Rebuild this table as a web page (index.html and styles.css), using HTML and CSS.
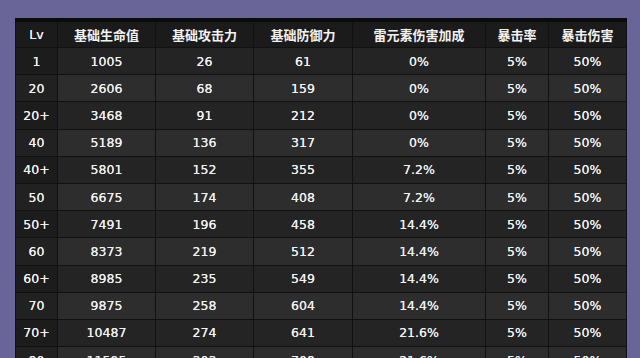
FILE: index.html
```html
<!DOCTYPE html>
<html lang="zh">
<head>
<meta charset="utf-8">
<link rel="stylesheet" href="styles.css">
</head>
<body>
<div class="page">
<table class="stats">
  <colgroup>
    <col class="c1"><col class="c2"><col class="c3"><col class="c4"><col class="c5"><col class="c6"><col class="c7">
  </colgroup>
  <thead>
    <tr><th class="lv">Lv</th><th>基础生命值</th><th>基础攻击力</th><th>基础防御力</th><th>雷元素伤害加成</th><th>暴击率</th><th>暴击伤害</th></tr>
  </thead>
  <tbody>
    <tr><td>1</td><td>1005</td><td>26</td><td>61</td><td>0%</td><td>5%</td><td>50%</td></tr>
    <tr><td>20</td><td>2606</td><td>68</td><td>159</td><td>0%</td><td>5%</td><td>50%</td></tr>
    <tr><td>20+</td><td>3468</td><td>91</td><td>212</td><td>0%</td><td>5%</td><td>50%</td></tr>
    <tr><td>40</td><td>5189</td><td>136</td><td>317</td><td>0%</td><td>5%</td><td>50%</td></tr>
    <tr><td>40+</td><td>5801</td><td>152</td><td>355</td><td>7.2%</td><td>5%</td><td>50%</td></tr>
    <tr><td>50</td><td>6675</td><td>174</td><td>408</td><td>7.2%</td><td>5%</td><td>50%</td></tr>
    <tr><td>50+</td><td>7491</td><td>196</td><td>458</td><td>14.4%</td><td>5%</td><td>50%</td></tr>
    <tr><td>60</td><td>8373</td><td>219</td><td>512</td><td>14.4%</td><td>5%</td><td>50%</td></tr>
    <tr><td>60+</td><td>8985</td><td>235</td><td>549</td><td>14.4%</td><td>5%</td><td>50%</td></tr>
    <tr><td>70</td><td>9875</td><td>258</td><td>604</td><td>14.4%</td><td>5%</td><td>50%</td></tr>
    <tr><td>70+</td><td>10487</td><td>274</td><td>641</td><td>21.6%</td><td>5%</td><td>50%</td></tr>
    <tr><td>80</td><td>11595</td><td>303</td><td>708</td><td>21.6%</td><td>5%</td><td>50%</td></tr>
  </tbody>
</table>
</div>
</body>
</html>
```

FILE: styles.css
```css
html, body {
  margin: 0;
  padding: 0;
  background: #6a6598;
  overflow: hidden;
}
.page {
  padding: 18px 0 0 15px;
  height: 358px;
  box-sizing: border-box;
}
.stats {
  border-collapse: collapse;
  table-layout: fixed;
  width: 611px;
  border-top: 4px solid #0c0c0c;
  font-family: "DejaVu Sans", "Noto Sans CJK SC", sans-serif;
  font-weight: 400;
  font-size: 12.5px;
  color: #f0f0f0;
  text-shadow: 0 0 0.4px #fff;
}
.c1 { width: 42px; }
.c2 { width: 98px; }
.c3 { width: 98px; }
.c4 { width: 99px; }
.c5 { width: 133px; }
.c6 { width: 63px; }
.c7 { width: 78px; }
.stats th, .stats td {
  text-align: center;
  padding: 0;
  border: 1px solid #111;
  border-top: none;
  border-bottom: 1px solid #111;
}
.stats th {
  height: 25px;
  background: #1b1b1b;
  font-family: "Noto Sans CJK SC", sans-serif;
  font-weight: 700;
  font-size: 13px;
  color: #f2f2f2;
  text-shadow: none;
}
.stats th.lv {
  font-family: "DejaVu Sans", sans-serif;
  font-weight: 400;
  font-size: 12.5px;
  text-shadow: 0 0 0.4px #fff;
}
.stats td {
  height: 26.2px;
  background: #242424;
}
.stats tbody tr:nth-child(even) td {
  background: #2d2d2d;
}
.stats td:first-child {
  background: #1c1c1c;
}
.stats tbody tr:nth-child(even) td:first-child {
  background: #212121;
}
```
